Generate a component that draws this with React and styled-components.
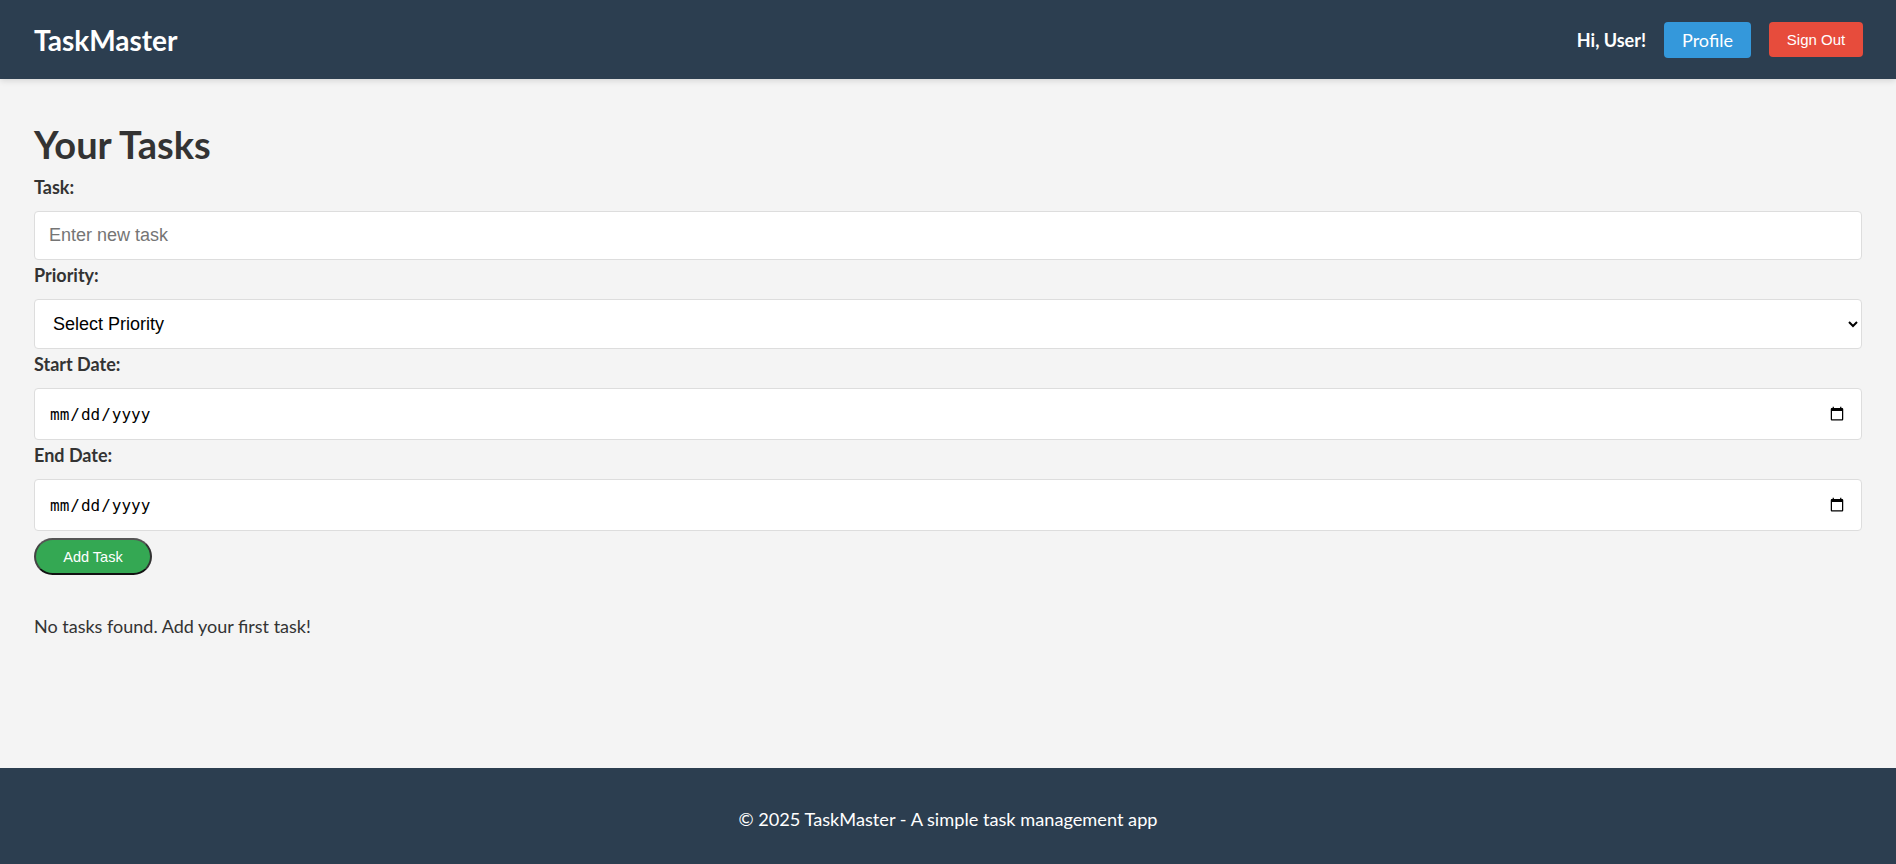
import styled, { createGlobalStyle } from "styled-components";

const GlobalStyle = createGlobalStyle`
  html, body {
    margin: 0;
    padding: 0;
    height: 100%;
  }
  body {
    font-family: Lato, "Open Sans", sans-serif;
    background: #f4f4f4;
    color: #333;
  }
  #root {
    min-height: 100vh;
    display: flex;
    flex-direction: column;
  }
`;

const Header = styled.header`
  height: 79px;
  background: #2c3e50;
  color: #fff;
  padding: 0 33px 0 34px;
  display: flex;
  align-items: center;
  justify-content: space-between;
  box-shadow: 0 2px 6px rgba(0, 0, 0, 0.12);
  flex-shrink: 0;
`;

const Logo = styled.h1`
  margin: 0;
  font-size: 28px;
  font-weight: 700;
`;

const UserArea = styled.div`
  display: flex;
  align-items: center;
  gap: 18px;
`;

const Greeting = styled.span`
  font-weight: 700;
  font-size: 18px;
`;

const NavButton = styled.button`
  width: ${({ $variant }) => ($variant === "danger" ? "94px" : "87px")};
  height: ${({ $variant }) => ($variant === "danger" ? "35px" : "36px")};
  padding: 0;
  border: none;
  border-radius: 4px;
  color: #fff;
  cursor: pointer;
  background: ${({ $variant }) => ($variant === "danger" ? "#e74c3c" : "#3498db")};
  font-family: ${({ $variant }) =>
    $variant === "danger" ? '"Liberation Sans", Arial, sans-serif' : "Lato, sans-serif"};
  font-size: ${({ $variant }) => ($variant === "danger" ? "15px" : "18px")};
`;

const Main = styled.main`
  flex: 1;
  padding: 39px 34px 20px;
`;

const Title = styled.h2`
  margin: 0 0 4px;
  font-size: 38px;
  font-weight: 700;
  line-height: 53px;
`;

const Form = styled.form`
  display: flex;
  flex-direction: column;
  align-items: flex-start;
`;

const Label = styled.label`
  font-size: 18px;
  font-weight: 700;
  line-height: 24px;
  margin-bottom: 12px;
`;

const Field = styled.input`
  box-sizing: border-box;
  width: 100%;
  height: ${({ $h }) => $h || 49}px;
  padding: 0 14px;
  margin-bottom: 3px;
  border: 1px solid #ddd;
  border-radius: 4px;
  background: #fff;
  font-family: ${({ type }) =>
    type === "date" ? '"DejaVu Sans Mono", monospace' : '"Liberation Sans", Arial, sans-serif'};
  font-size: ${({ type }) => (type === "date" ? "16px" : "18px")};
  color: #000;

  &::placeholder {
    color: #757575;
  }
`;

const Select = styled.select`
  box-sizing: border-box;
  width: 100%;
  height: 50px;
  padding: 0 14px;
  margin-bottom: 3px;
  border: 1px solid #ddd;
  border-radius: 4px;
  background: #fff;
  font-family: "Liberation Sans", Arial, sans-serif;
  font-size: 18px;
  color: #000;
`;

const AddButton = styled.button`
  width: 118px;
  height: 37px;
  margin-top: 4px;
  border: 2px solid;
  border-color: #555 #333 #111 #444;
  border-radius: 20px;
  background: #34a853;
  color: #fff;
  font-family: "Liberation Sans", Arial, sans-serif;
  font-size: 14.5px;
  cursor: pointer;
`;

const Empty = styled.p`
  margin: 40px 0 0;
  font-size: 18px;
  line-height: 22px;
`;

const Footer = styled.footer`
  box-sizing: border-box;
  height: 96px;
  padding-top: 6px;
  background: #2c3e50;
  color: #fff;
  display: flex;
  align-items: center;
  justify-content: center;
  font-size: 18.2px;
  flex-shrink: 0;
`;

export default function App() {
  return (
    <>
      <GlobalStyle />
      <Header>
        <Logo>TaskMaster</Logo>
        <UserArea>
          <Greeting>Hi, User!</Greeting>
          <NavButton>Profile</NavButton>
          <NavButton $variant="danger">Sign Out</NavButton>
        </UserArea>
      </Header>
      <Main>
        <Title>Your Tasks</Title>
        <Form onSubmit={e => e.preventDefault()}>
          <Label htmlFor="task">Task:</Label>
          <Field id="task" type="text" placeholder="Enter new task" />
          <Label htmlFor="priority">Priority:</Label>
          <Select id="priority" defaultValue="">
            <option value="">Select Priority</option>
            <option value="low">Low</option>
            <option value="medium">Medium</option>
            <option value="high">High</option>
          </Select>
          <Label htmlFor="start">Start Date:</Label>
          <Field id="start" type="date" $h={52} />
          <Label htmlFor="end">End Date:</Label>
          <Field id="end" type="date" $h={52} />
          <AddButton type="submit">Add Task</AddButton>
        </Form>
        <Empty>No tasks found. Add your first task!</Empty>
      </Main>
      <Footer>© 2025 TaskMaster - A simple task management app</Footer>
    </>
  );
}
